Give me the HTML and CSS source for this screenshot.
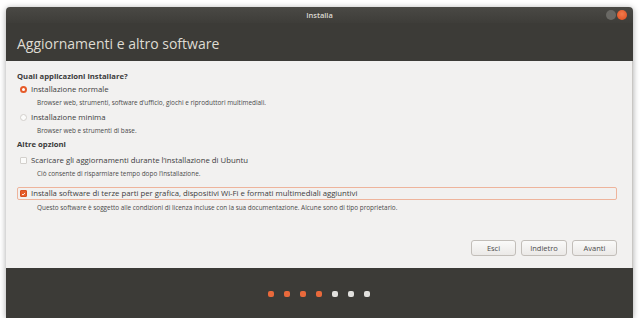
FILE: index.html
```html
<!DOCTYPE html>
<html lang="it">
<head>
    <meta charset="utf-8">
    <title>Installa</title>
    <link rel="stylesheet" href="styles.css">
</head>
<body>
    <div class="window">
        <div class="titlebar">
            <span class="title">Installa</span>
            <div class="controls">
                <span class="ctl min"></span>
                <span class="ctl close"></span>
            </div>
        </div>
        <div class="header">
            <h1>Aggiornamenti e altro software</h1>
        </div>
        <div class="content">
            <h3 class="section first">Quali applicazioni installare?</h3>
            <div class="option opt-radio1"><span class="radio on"></span>Installazione normale</div>
            <div class="desc">Browser web, strumenti, software d’ufficio, giochi e riproduttori multimediali.</div>
            <div class="option"><span class="radio"></span>Installazione minima</div>
            <div class="desc">Browser web e strumenti di base.</div>
            <h3 class="section second">Altre opzioni</h3>
            <div class="option opt-check1"><span class="check"></span>Scaricare gli aggiornamenti durante l’installazione di Ubuntu</div>
            <div class="desc">Ciò consente di risparmiare tempo dopo l’installazione.</div>
            <div class="option focused"><span class="check on"><svg width="8" height="8" viewBox="0 0 8 8"><path d="M1.6 4.1 L3.3 5.7 L6.4 2.3" fill="none" stroke="#fff" stroke-width="1.4"/></svg></span>Installa software di terze parti per grafica, dispositivi Wi-Fi e formati multimediali aggiuntivi</div>
            <div class="desc after-focus">Questo software è soggetto alle condizioni di licenza incluse con la sua documentazione. Alcune sono di tipo proprietario.</div>
            <div class="buttons">
                <button class="btn b-esci">Esci</button>
                <button class="btn b-indietro">Indietro</button>
                <button class="btn b-avanti">Avanti</button>
            </div>
        </div>
        <div class="footer">
            <span class="dot done"></span>
            <span class="dot done"></span>
            <span class="dot done"></span>
            <span class="dot done"></span>
            <span class="dot"></span>
            <span class="dot"></span>
            <span class="dot"></span>
        </div>
    </div>
</body>
</html>
```

FILE: styles.css
```css
* {
    margin: 0;
    padding: 0;
    box-sizing: border-box;
}
body {
    background: #fff;
    font-family: "Open Sans", sans-serif;
    color: #3c3c3c;
}
.window {
    width: 627px;
    height: 311px;
    margin: 7px 0 0 6px;
    display: flex;
    flex-direction: column;
    box-shadow: 0 1px 6px rgba(0, 0, 0, 0.35);
    border-radius: 4px 4px 0 0;
    overflow: hidden;
}
.titlebar {
    height: 16px;
    background: linear-gradient(#4a4945, #3e3d39);
    display: flex;
    align-items: center;
    justify-content: center;
    position: relative;
}
.title {
    color: #dcd9d2;
    font-size: 7.5px;
    font-weight: 600;
}
.controls {
    position: absolute;
    right: 6px;
    top: 3px;
    display: flex;
    gap: 1px;
}
.ctl {
    width: 10px;
    height: 10px;
    border-radius: 50%;
}
.ctl.min {
    background: #6a6965;
}
.ctl.close {
    background: radial-gradient(circle at 50% 40%, #f27a4c, #de4c1e);
}
.header {
    height: 38px;
    background: #3c3b37;
    display: flex;
    align-items: center;
    padding-left: 11px;
}
.header h1 {
    font-weight: 400;
    font-size: 14px;
    color: #dfdbd2;
    margin-top: 2px;
}
.content {
    flex: 1;
    background: #f2f1f0;
    padding: 8px 15px 12px 11px;
    display: flex;
    flex-direction: column;
    border-right: 1px solid #c9c7c4;
}
.section {
    font-size: 7.7px;
    font-weight: 700;
    line-height: 14px;
    color: #3c3c3c;
}
.section.second {
    margin-top: -1px;
}
.option {
    font-size: 7.75px;
    line-height: 14px;
    display: flex;
    align-items: center;
    padding-left: 3px;
    color: #404040;
}
.opt-radio1 {
    margin-top: -1px;
}
.opt-check1 {
    margin-top: 2px;
}
.desc {
    font-size: 6.4px;
    line-height: 14px;
    padding-left: 20px;
    color: #4a4a4a;
}
.radio, .check {
    width: 7px;
    height: 7px;
    margin-right: 4px;
    border: 1px solid #d3d0cc;
    background: #fbfbfa;
    display: flex;
    align-items: center;
    justify-content: center;
}
.radio {
    border-radius: 50%;
}
.radio.on {
    border: 2px solid #e65b29;
    background: #fff;
}
.check {
    border-radius: 1px;
}
.check.on {
    background: #e65b29;
    border-color: #d74f1f;
}
.focused {
    margin-top: 6px;
    height: 13px;
    line-height: 11px;
    border: 1px solid #eeb49c;
    border-radius: 2px;
    padding-left: 2px;
}
.after-focus {
    margin-top: 1px;
}
.buttons {
    margin-top: auto;
    display: flex;
    justify-content: flex-end;
    gap: 5px;
}
.btn {
    height: 16px;
    font-family: "Open Sans", sans-serif;
    font-size: 7.5px;
    color: #4c4c4c;
    background: linear-gradient(#fafaf9, #ebe9e7);
    border: 1px solid #c2beb9;
    border-radius: 3px;
}
.b-esci {
    width: 45px;
}
.b-indietro {
    width: 46px;
}
.b-avanti {
    width: 45px;
}
.footer {
    height: 50px;
    background: #3c3b37;
    display: flex;
    align-items: center;
    justify-content: center;
    gap: 10px;
    padding-top: 2px;
    padding-right: 1px;
}
.dot {
    width: 6px;
    height: 6px;
    border-radius: 2px;
    background: #e1e0dd;
}
.dot.done {
    background: #e9693b;
}
```
